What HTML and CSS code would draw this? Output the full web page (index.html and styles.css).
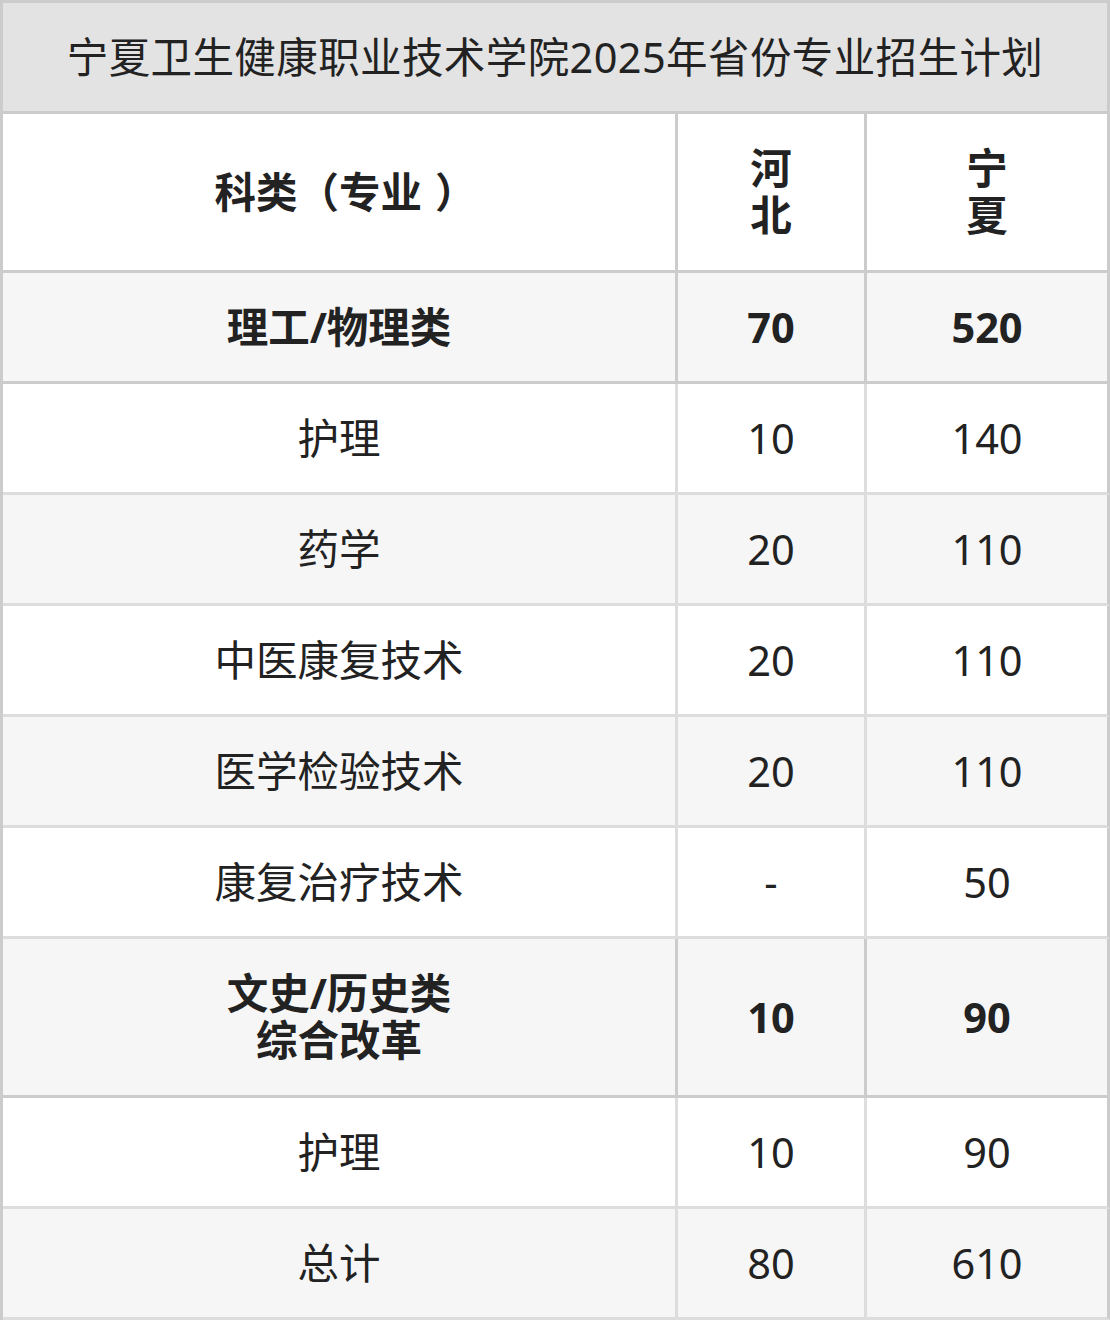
FILE: index.html
```html
<!DOCTYPE html>
<html lang="zh-CN">
<head>
<meta charset="utf-8">
<title>宁夏卫生健康职业技术学院2025年省份专业招生计划</title>
<link rel="stylesheet" href="styles.css">
</head>
<body>
<table class="plan">
  <colgroup>
    <col class="c1"><col class="c2"><col class="c3">
  </colgroup>
  <thead>
    <tr><th class="title" colspan="3">宁夏卫生健康职业技术学院2025年省份专业招生计划</th></tr>
    <tr class="head">
      <th>科类（专业<span class="paren-close">）</span></th>
      <th>河<br>北</th>
      <th>宁<br>夏</th>
    </tr>
  </thead>
  <tbody>
    <tr class="group alt"><td>理工/物理类</td><td>70</td><td>520</td></tr>
    <tr><td>护理</td><td>10</td><td>140</td></tr>
    <tr class="alt"><td>药学</td><td>20</td><td>110</td></tr>
    <tr><td>中医康复技术</td><td>20</td><td>110</td></tr>
    <tr class="alt"><td>医学检验技术</td><td>20</td><td>110</td></tr>
    <tr><td>康复治疗技术</td><td>-</td><td>50</td></tr>
    <tr class="group alt tall"><td>文史/历史类<br>综合改革</td><td>10</td><td>90</td></tr>
    <tr><td>护理</td><td>10</td><td>90</td></tr>
    <tr class="alt"><td>总计</td><td>80</td><td>610</td></tr>
  </tbody>
</table>
</body>
</html>
```

FILE: styles.css
```css
html, body {
  margin: 0;
  padding: 0;
  background: #ffffff;
}

.plan {
  width: 1110px;
  border-collapse: separate;
  border-spacing: 0;
  border-left: 3px solid #cccccc;
  border-top: 3px solid #cccccc;
  table-layout: fixed;
  font-family: "Noto Sans", "Noto Sans CJK SC", sans-serif;
  font-size: 41.5px;
  color: #222222;
}

.c1 { width: 675px; }
.c2 { width: 189px; }
.c3 { width: 243px; }

.plan th,
.plan td {
  padding: 0;
  text-align: center;
  vertical-align: middle;
  border-right: 3px solid #dddddd;
  border-bottom: 3px solid #dddddd;
  line-height: 47px;
  height: 108px;
  box-sizing: content-box;
}

.plan .title {
  background: #e3e3e3;
  font-weight: 400;
  letter-spacing: 0.4px;
  border-right-color: #cccccc;
  border-bottom-color: #cccccc;
  height: 108px;
}

.plan .head th {
  background: #ffffff;
  font-weight: 700;
  height: 156px;
  border-right-color: #cccccc;
  border-bottom-color: #cccccc;
}

.paren-close {
  padding-left: 13px;
  margin-right: -13px;
}

.plan tr.alt td {
  background: #f6f6f6;
}

.plan tr.group td {
  font-weight: 700;
  border-right-color: #cccccc;
  border-bottom-color: #cccccc;
}

.plan tr.tall td {
  height: 156px;
}

.plan td:last-child,
.plan th:last-child {
  border-right-color: #cccccc;
}
```
